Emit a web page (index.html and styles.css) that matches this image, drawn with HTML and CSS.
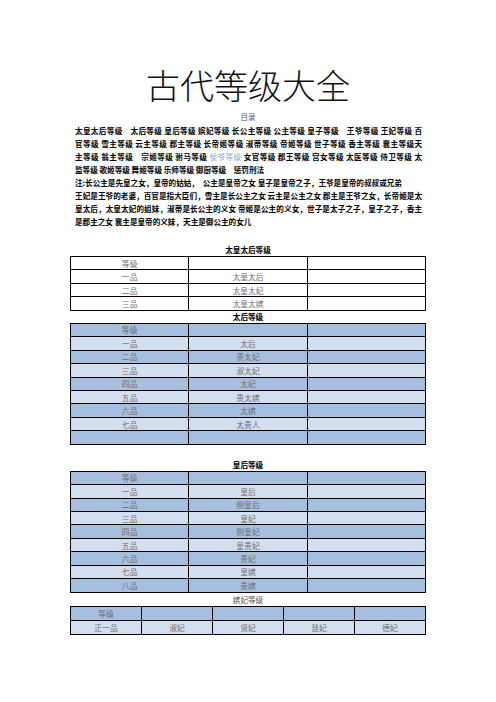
FILE: index.html
```html
<!DOCTYPE html>
<html lang="zh-CN">
<head>
<meta charset="utf-8">
<title>古代等级大全</title>
<link rel="stylesheet" href="styles.css">
</head>
<body>
<div class="page">
  <h1 class="title">古代等级大全</h1>
  <div class="toc">目录</div>
  <div class="intro">
    <div class="jl">太皇太后等级　太后等级 皇后等级 嫔妃等级 长公主等级 公主等级 皇子等级　王爷等级 王妃等级 百</div>
    <div class="jl">官等级 雪主等级 云主等级 郡主等级 长帝姬等级 淑蒂等级 帝姬等级 世子等级 香主等级 襄主等级天</div>
    <div class="jl">主等级 翁主等级　宗姬等级 驸马等级 <span class="link">侯爷等级</span> 女官等级 郡王等级 宫女等级 太医等级 侍卫等级 太</div>
    <div class="ln">监等级 歌姬等级 舞姬等级 乐师等级 御厨等级　惩罚刑法</div>
    <div class="ln">注:长公主是先皇之女，皇帝的姑姑，　公主是皇帝之女 皇子是皇帝之子，王爷是皇帝的叔叔或兄弟</div>
    <div class="jl">王妃是王爷的老婆，百官是指大臣们，雪主是长公主之女 云主是公主之女 郡主是王爷之女，长帝姬是太</div>
    <div class="jl">皇太后，太皇太妃的姐妹，淑蒂是长公主的义女 帝姬是公主的义女，世子是太子之子，皇子之子，香主</div>
    <div class="ln">是郡主之女 襄主是皇帝的义妹，天主是御公主的女儿</div>
  </div>

  <div class="cap cap-first">太皇太后等级</div>
  <table class="grid plain">
    <tr><td>等级</td><td></td><td></td></tr>
    <tr><td>一品</td><td>太皇太后</td><td></td></tr>
    <tr><td>二品</td><td>太皇太妃</td><td></td></tr>
    <tr><td>三品</td><td>太皇太嫔</td><td></td></tr>
  </table>

  <div class="cap">太后等级</div>
  <table class="grid blue">
    <tr><td>等级</td><td></td><td></td></tr>
    <tr><td>一品</td><td>太后</td><td></td></tr>
    <tr><td>二品</td><td>贵太妃</td><td></td></tr>
    <tr><td>三品</td><td>淑太妃</td><td></td></tr>
    <tr><td>四品</td><td>太妃</td><td></td></tr>
    <tr><td>五品</td><td>贵太嫔</td><td></td></tr>
    <tr><td>六品</td><td>太嫔</td><td></td></tr>
    <tr><td>七品</td><td>太贵人</td><td></td></tr>
    <tr><td></td><td></td><td></td></tr>
  </table>

  <div class="cap cap-gap">皇后等级</div>
  <table class="grid blue">
    <tr><td>等级</td><td></td><td></td></tr>
    <tr><td>一品</td><td>皇后</td><td></td></tr>
    <tr><td>二品</td><td>侧皇后</td><td></td></tr>
    <tr><td>三品</td><td>皇妃</td><td></td></tr>
    <tr><td>四品</td><td>侧皇妃</td><td></td></tr>
    <tr><td>五品</td><td>皇贵妃</td><td></td></tr>
    <tr><td>六品</td><td>贵妃</td><td></td></tr>
    <tr><td>七品</td><td>皇嫔</td><td></td></tr>
    <tr><td>八品</td><td>贵嫔</td><td></td></tr>
  </table>

  <div class="cap cap-light">嫔妃等级</div>
  <table class="grid blue five">
    <tr><td>等级</td><td></td><td></td><td></td><td></td></tr>
    <tr><td>正一品</td><td>淑妃</td><td>贤妃</td><td>慧妃</td><td>德妃</td></tr>
  </table>
</div>
</body>
</html>
```

FILE: styles.css
```css
html, body {
  margin: 0;
  padding: 0;
  background: #ffffff;
}

.page {
  width: 356px;
  margin: 0 auto;
  padding-top: 65px;
  font-family: "Noto Sans CJK SC", "Liberation Sans", sans-serif;
  color: #000;
}

.title {
  margin: 0;
  font-size: 34px;
  line-height: 40px;
  font-weight: 300;
  text-align: center;
  color: #111;
}

.toc {
  margin-top: 6px;
  font-size: 7.5px;
  line-height: 12px;
  text-align: center;
  color: #555;
}

.intro {
  margin-top: 1px;
  padding: 0 4px 0 5px;
  font-size: 7.6px;
  line-height: 13px;
  font-weight: 700;
  white-space: nowrap;
}

.jl {
  text-align: justify;
  text-align-last: justify;
}

.ln {
  text-align: left;
}

.link {
  color: #8ea8d8;
  font-weight: 400;
}

.cap {
  font-size: 7.6px;
  line-height: 12px;
  font-weight: 700;
  text-align: center;
}

.cap-first {
  margin-top: 16px;
}

.cap-gap {
  margin-top: 14px;
}

.cap-light {
  font-weight: 400;
  color: #555;
  line-height: 13px;
}

.grid {
  width: 356px;
  border-collapse: collapse;
  table-layout: fixed;
}

.grid td {
  border: 1.3px solid #000;
  height: 13.45px;
  padding: 0;
  box-sizing: border-box;
  font-size: 7.8px;
  line-height: 11px;
  text-align: center;
  color: #6e6e6e;
  font-weight: 400;
}

.blue tr:nth-child(odd) td {
  background: #a7bfde;
}

.blue tr:nth-child(even) td {
  background: #d3dfee;
}

.five td {
  height: 14px;
}
```
